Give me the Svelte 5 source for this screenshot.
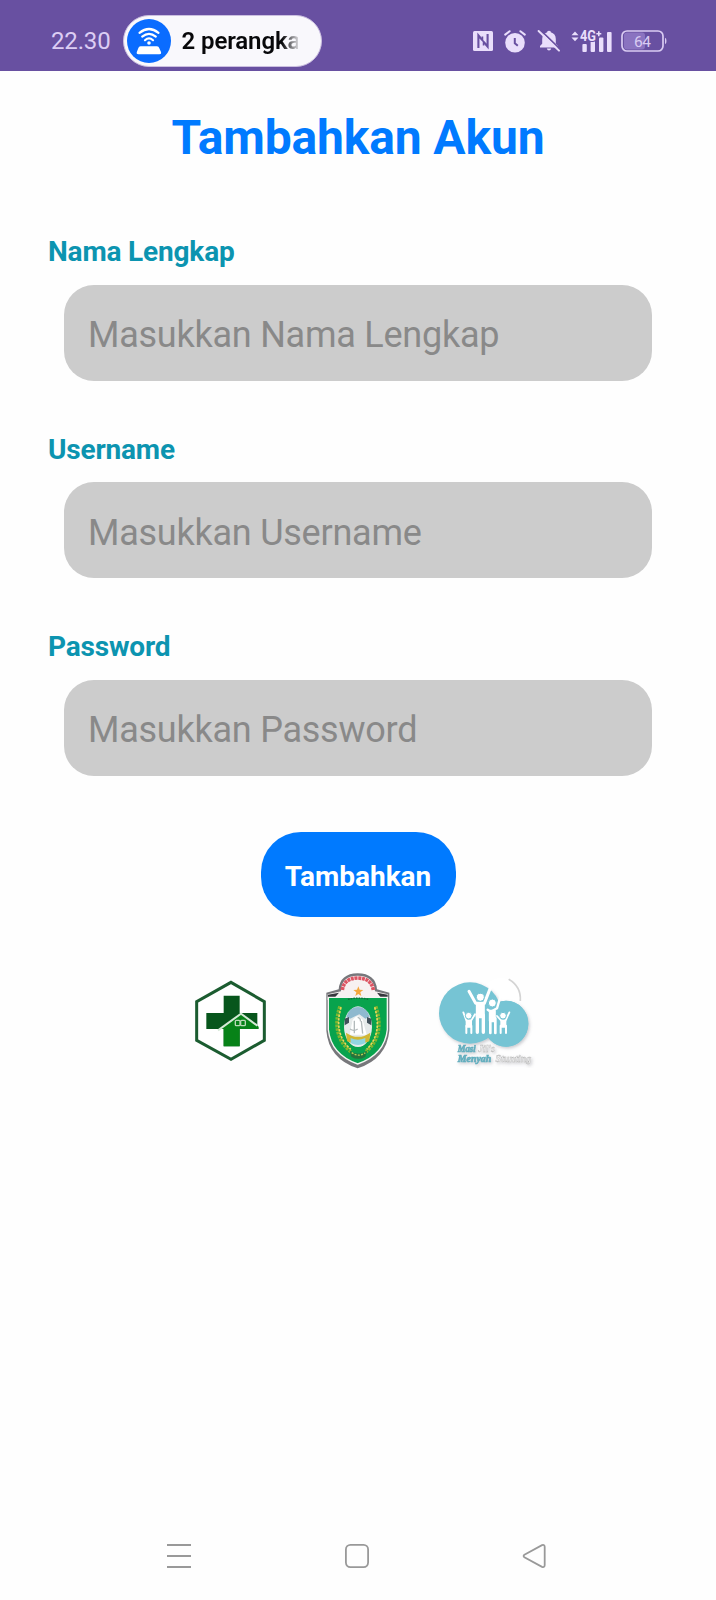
<script>
  const fields = [
    { id: 'nama', label: 'Nama Lengkap', placeholder: 'Masukkan Nama Lengkap', type: 'text' },
    { id: 'username', label: 'Username', placeholder: 'Masukkan Username', type: 'text' },
    { id: 'password', label: 'Password', placeholder: 'Masukkan Password', type: 'password' }
  ];
</script>

<div class="screen">
  <header class="status">
    <span class="time">22.30</span>
    <div class="pill">
      <svg class="hotspot" width="44" height="44" viewBox="0 0 44 44">
        <circle cx="22" cy="22" r="22" fill="#0a6cff" />
        <g fill="none" stroke="#fff" stroke-width="2.2" stroke-linecap="round">
          <path d="M12.5 13.8Q22 6.2 31.5 13.8" />
          <path d="M15.2 17.6Q22 12 28.8 17.6" />
          <path d="M18 21.2Q22 17.6 26 21.2" />
        </g>
        <circle cx="22" cy="24" r="1.8" fill="#fff" />
        <path d="M13.5 27.3h16.5q1.8 0 2.2 1.6l1.8 4.2q.6 2.2-1.6 2.2H11.4q-2.2 0-1.6-2.2l1.6-4.2q.4-1.6 2.1-1.6z" fill="#fff" />
      </svg>
      <span class="pilltext">2 perangka</span>
    </div>
    <div class="icons">
      <svg width="20" height="20" viewBox="0 0 20 20">
        <rect width="20" height="20" rx="1.5" fill="#e9defb" />
        <path d="M5.4 17V4.4L9.2 9M10.8 11L14.6 15.6V3" fill="none" stroke="#6850a1" stroke-width="2.1" />
        <path d="M9.4 5.6V9.2L10.6 10.8V14.4" fill="none" stroke="#6850a1" stroke-width="1.7" />
      </svg>
      <svg class="alarm" width="22" height="23" viewBox="0 0 22 23">
        <circle cx="11" cy="12.7" r="9.8" fill="#e9defb" />
        <path d="M1.2 4.6L5.6 1.2M20.8 4.6L16.4 1.2" stroke="#e9defb" stroke-width="2" stroke-linecap="round" />
        <path d="M10.8 8v5.2l3 2.6" stroke="#6850a1" stroke-width="2" fill="none" />
      </svg>
      <svg class="bell" width="22" height="22" viewBox="0 0 22 22">
        <path d="M2 17.5v-1.4l2.2-2.4V9c0-3.6 2-6 5-6.8V1.5q1.8-1.7 3.6 0v.7c3 .8 5 3.2 5 6.8v4.7l2.2 2.4v1.4zM8.8 18.4h4.4q-.4 2-2.2 2t-2.2-2z" fill="#e9defb" />
        <path d="M2 -.4L21.6 18.6" stroke="#6850a1" stroke-width="1.6" />
        <path d="M.6 1L21 20.6" stroke="#e9defb" stroke-width="2" stroke-linecap="round" />
      </svg>
      <svg class="signal" width="42" height="24" viewBox="0 0 42 24">
        <g fill="#e9defb">
          <path d="M.5 6.2L4 2.4 7.5 6.2zM.5 8.4h7L4 12.2z" />
          <rect x="11.4" y="15" width="4.4" height="8" rx="1" />
          <rect x="19.6" y="12" width="4.4" height="11" rx="1" />
          <rect x="28" y="8.6" width="4.4" height="14.4" rx="1" />
          <rect x="36" y="3" width="4.6" height="20" rx="1" />
          <text x="9" y="12.4" font-size="14" font-weight="700" stroke="#6850a1" stroke-width="2" paint-order="stroke" textLength="16" lengthAdjust="spacingAndGlyphs">4G</text>
          <path d="M27 2.2h1.6v1.7h1.7v1.6h-1.7v1.7H27V5.5h-1.7V3.9H27z" />
        </g>
      </svg>
      <svg class="battery" width="46" height="22" viewBox="0 0 46 22">
        <rect x="3" y="2.5" width="21" height="17" rx="3" fill="#8a73c0" />
        <rect x="1" y="1" width="41" height="20" rx="5" fill="none" stroke="#d9cbf2" stroke-width="1.7" />
        <path d="M44 7.8q1.5.4 1.5 3.2T44 14.2z" fill="#d9cbf2" />
        <text x="13" y="16.5" font-size="15.5" fill="#d9cbf2" textLength="17">64</text>
      </svg>
    </div>
  </header>

  <main>
    <h1>Tambahkan Akun</h1>
    <form>
      {#each fields as f}
        <div class="field">
          <label for={f.id}>{f.label}</label>
          <input id={f.id} type={f.type} placeholder={f.placeholder} />
        </div>
      {/each}
      <button type="button">Tambahkan</button>
    </form>

    <div class="logos">
      <svg width="110" height="120" viewBox="0 0 330 360">
        <path d="M153 67L253 125V241L153 298L50 241V125Z" fill="#fff" stroke="#1b5c30" stroke-width="9" />
        <path d="M131 107h48v52h53v48h-53v52h-48v-52H79v-48h52z" fill="#07561c" />
        <path d="M120 207L183 160L236 200V207H179V259H131V207Z" fill="#078218" />
        <path d="M114 211L183 161L232 197" fill="none" stroke="#d5e9d6" stroke-width="6" />
        <g fill="none" stroke="#b9d9b6" stroke-width="4">
          <rect x="166" y="181" width="14" height="16" rx="3" />
          <rect x="182" y="181" width="14" height="16" rx="3" />
        </g>
      </svg>

      <svg width="100" height="120" viewBox="0 0 300 360">
        <path d="M49 98L86 88Q90 41 143 40Q197 41 201 88L238 98V212Q230 296 143 325Q56 296 49 212Z" fill="#77777b" />
        <path d="M53 103L93 94Q93 48 143 47Q193 48 195 94L234 103V120H53Z" fill="#f7f1f1" />
        <path d="M97 90Q102 55 143 54Q185 55 190 90" fill="none" stroke="#dd5563" stroke-width="11" stroke-dasharray="9 2" />
        <path d="M54 104L87 98L75 112H54ZM233 104L201 98L212 112H233Z" fill="#37373d" />
        <path d="M145 79l4 10 11 1-9 7 3 11-9-6-9 6 3-11-9-7 11-1z" fill="#f5a73c" />
        <path d="M55 112H232V209Q224 284 143 312Q63 284 55 209Z" fill="#08a34d" stroke="#f4f5f2" stroke-width="4" />
        <path d="M90 139Q62 225 122 275M197 139Q226 225 168 275" fill="none" stroke="#7fb52f" stroke-width="11" stroke-dasharray="8 3" />
        <path d="M93 142Q70 222 122 268M194 142Q218 222 170 268" fill="none" stroke="#e9d65a" stroke-width="5" stroke-dasharray="7 4" />
        <path d="M114 118Q144 111 176 118" fill="none" stroke="#126d38" stroke-width="4" stroke-dasharray="5 3" />
        <ellipse cx="144" cy="200" rx="42" ry="61" fill="#e6eaea" />
        <path d="M109 170Q118 141 144 141Q170 141 179 170L166 176L148 163L120 176Z" fill="#8fb9cf" />
        <path d="M104 176l13-5v17l-13 8zM171 171l13 5v20l-13-8z" fill="#41505a" />
        <path d="M119 224L128 180Q143 158 158 180L170 224Z" fill="#fff" />
        <path d="M133 182v38M154 183l4 38M120 207q12 8 23 0M143 172q10 3 8 12" stroke="#b3babb" stroke-width="4" fill="none" />
        <path d="M108 218Q144 243 181 218L178 244Q144 259 111 244Z" fill="#d0b735" />
        <path d="M122 234Q143 244 166 234V249Q144 261 122 249Z" fill="#91d5e0" />
        <path d="M119 272Q145 291 171 272L166 290Q145 303 124 290Z" fill="#26723b" />
        <path d="M125 278Q146 293 166 278" fill="none" stroke="#b9ce52" stroke-width="4" stroke-dasharray="6 4" />
      </svg>

      <svg width="115" height="120" viewBox="0 -15 345 360">
        <defs>
          <filter id="shade" x="-20%" y="-20%" width="140%" height="140%">
            <feDropShadow dx="4" dy="5" stdDeviation="4" flood-color="#667" flood-opacity=".35" />
          </filter>
        </defs>
        <circle cx="213" cy="95" r="56" fill="#fff" />
        <path d="M236 43Q274 65 271 108" fill="none" stroke="#d4d4d4" stroke-width="5" />
        <g fill="#76c4d4">
          <ellipse cx="228" cy="176" rx="67" ry="69" filter="url(#shade)" />
          <ellipse cx="120" cy="144" rx="93" ry="92" filter="url(#shade)" />
          <ellipse cx="228" cy="176" rx="67" ry="69" />
        </g>
        <g fill="none" stroke="#fff" stroke-linecap="round" stroke-linejoin="round">
          <path d="M117 79L137 115H163L185 59" stroke-width="9" />
          <path d="M142 117h18v38h-18z" stroke-width="9" fill="#fff" />
          <path d="M142 150V202M160 150V202" stroke-width="10" />
          <path d="M173 134L182 140L201 130L212 92" stroke-width="7" />
          <path d="M180 138h14v30h-14z" stroke-width="7" fill="#fff" />
          <path d="M181 160V204M196 160V204" stroke-width="8" />
          <path d="M100 142L109 166H124L135 148M201 153L213 166H227L238 142" stroke-width="5.5" />
          <path d="M110 168h13v17h-13zM214 168h12v17h-12z" stroke-width="6" fill="#fff" />
          <path d="M109 182V204M124 182V204M212 182V204M228 182V204" stroke-width="6" />
        </g>
        <g fill="#fff" stroke="#76c4d4" stroke-width="3">
          <circle cx="151" cy="97" r="12" />
          <circle cx="187" cy="114" r="12" />
          <circle cx="116" cy="152" r="10" />
          <circle cx="219" cy="152" r="10" />
        </g>
        <g class="script" font-size="30" filter="url(#shade)">
          <text x="83" y="260" fill="#63aebe" stroke="#63aebe" stroke-width="2" textLength="54" lengthAdjust="spacingAndGlyphs">Masi</text>
          <text x="145" y="260" fill="#eee" stroke="#b4b4b4" textLength="49" lengthAdjust="spacingAndGlyphs">Jil's</text>
          <text x="83" y="290" fill="#63aebe" stroke="#63aebe" stroke-width="2" textLength="101" lengthAdjust="spacingAndGlyphs">Menyah</text>
          <text x="196" y="290" fill="#eee" stroke="#b4b4b4" textLength="108" lengthAdjust="spacingAndGlyphs">Stunting</text>
        </g>
      </svg>
    </div>
  </main>

  <nav>
    <svg width="24" height="24" viewBox="0 0 24 24">
      <path d="M0 1h24M0 12h24M0 23h24" />
    </svg>
    <svg width="24" height="24" viewBox="0 0 24 24">
      <rect x=".9" y=".9" width="22.2" height="22.2" rx="4.5" />
    </svg>
    <svg width="24" height="24" viewBox="0 0 24 24">
      <path d="M2.4 10.7L20 1.2Q22.7.3 22.7 3V21Q22.7 23.7 20 22.8L2.4 13.3Q.8 12 2.4 10.7Z" />
    </svg>
  </nav>
</div>

<style>
  :global(body) { margin: 0; background: #fff; }
  .screen {
    width: 716px;
    height: 1600px;
    box-sizing: border-box;
    display: flex;
    flex-direction: column;
    background: #fefefe;
    font-family: Roboto, sans-serif;
    overflow: hidden;
  }
  svg { display: block; flex: none; overflow: visible; }
  .status {
    height: 71px;
    box-sizing: border-box;
    flex: none;
    display: flex;
    align-items: center;
    padding: 11px 49px 0 51px;
    background: #6850a1;
  }
  .time { width: 71.5px; font-size: 24px; line-height: 28px; letter-spacing: -.15px; color: #dccdf4; }
  .pill {
    width: 199.5px;
    height: 52px;
    box-sizing: border-box;
    display: flex;
    align-items: center;
    gap: 11px;
    padding: 0 23px 0 3px;
    border: 1px solid #cbbfe0;
    border-radius: 26px;
    background: #f9f8fc;
  }
  .pilltext {
    width: 117px;
    overflow: hidden;
    white-space: nowrap;
    font-size: 24px;
    line-height: 30px;
    font-weight: 600;
    letter-spacing: -.1px;
    color: #08080a;
    mask-image: linear-gradient(90deg, #000 100px, transparent 119px);
  }
  .icons { display: flex; align-items: center; margin-left: auto; }
  .alarm { margin-left: 11px; }
  .bell { margin-left: 12px; }
  .signal { margin-left: 11px; }
  .battery { margin-left: 8px; }
  main { flex: 1; display: flex; flex-direction: column; align-items: center; }
  h1 {
    margin: 39px 0 0;
    font-size: 48px;
    line-height: 56px;
    font-weight: 700;
    letter-spacing: -.15px;
    color: #007aff;
  }
  form { width: 100%; margin-top: 69px; display: flex; flex-direction: column; align-items: center; }
  .field {
    width: 100%;
    height: 197.5px;
    box-sizing: border-box;
    padding: 0 64px 0 48px;
    display: flex;
    flex-direction: column;
  }
  label { height: 34px; line-height: 34px; font-size: 28px; font-weight: 700; letter-spacing: -.17px; color: #0c94b0; }
  input {
    height: 96px;
    box-sizing: border-box;
    margin: 15.6px 0 0 16px;
    padding: 5px 24px 0;
    border: 0;
    border-radius: 30px;
    background: #ccc;
    font: 400 36px/42px Roboto, sans-serif;
    letter-spacing: -.24px;
  }
  input::placeholder { color: #898989; opacity: 1; }
  button {
    width: 195px;
    height: 85px;
    margin-top: 4.5px;
    padding: 4px 0 0;
    border: 0;
    border-radius: 40px;
    background: #007aff;
    color: #fff;
    font: 700 28px/34px Roboto, sans-serif;
  }
  .logos { display: flex; gap: 20px; margin-top: 43px; width: 365px; padding-left: 9px; }
  .script { font-family: "Liberation Serif", serif; font-style: italic; font-weight: 700; }
  nav {
    flex: none;
    display: flex;
    justify-content: space-between;
    padding: 0 170px 32px 167px;
  }
  nav svg { fill: none; stroke: #999; stroke-width: 1.8; }
</style>
